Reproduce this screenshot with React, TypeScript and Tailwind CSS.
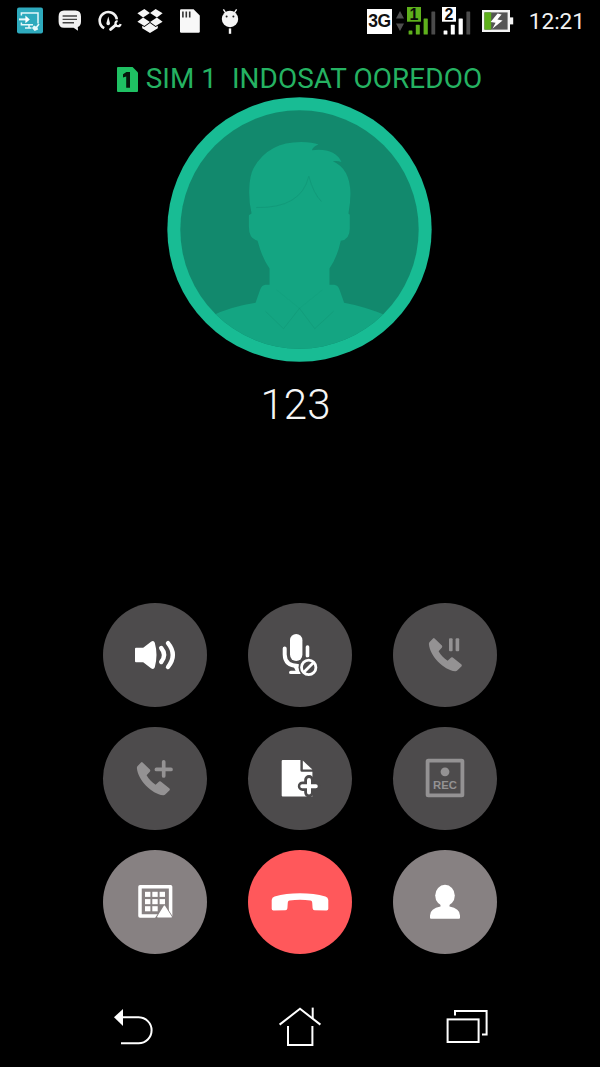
import type { ReactNode } from 'react';

const HANDSET =
  'M19.6 13.4 Q18.8 12.8 18 13.4 L14.4 17.2 Q13.8 18 13.9 19.2 C15 31 28.5 45 40.2 46.2 Q41.4 46.3 42.2 45.6 L46.6 41.2 Q47.2 40.4 46.5 39.6 L37.8 32.5 Q36.9 31.9 36.1 32.6 L32.6 35.8 C29 33.4 25.6 30 23.6 26.2 L27 22.4 Q27.6 21.5 26.9 20.6 Z';

function ButtonIcon({ children }: { children: ReactNode }) {
  return (
    <svg viewBox="0 0 60 60" className="size-[60px]" fill="currentColor">
      {children}
    </svg>
  );
}

function SpeakerIcon() {
  return (
    <ButtonIcon>
      <path d="M11 22.7 H18.2 L26 16.7 Q28.8 14.9 29.8 17.8 Q33.2 30 29.8 42.2 Q28.8 45.1 26 43.3 L18.2 37.3 H11 Q10 37.3 10 36.3 V23.7 Q10 22.7 11 22.7 Z" />
      <g fill="none" stroke="currentColor" strokeWidth="4.4" strokeLinecap="round">
        <path d="M36.2 23 Q42 30 36.2 37" />
        <path d="M43 18.2 Q52.6 30 43 42" />
      </g>
    </ButtonIcon>
  );
}

function MuteIcon() {
  return (
    <ButtonIcon>
      <rect x="20" y="9" width="12.4" height="27" rx="6.2" />
      <g fill="none" stroke="currentColor" strokeWidth="4">
        <path d="M14.7 23.4 V29.4 Q14.9 40.6 28 41" strokeLinecap="round" />
        <path d="M37.5 22 V31" strokeWidth="3.6" strokeLinecap="round" />
      </g>
      <path d="M22.8 40 H30.6 V49 H20.8 Q19 49 19 47.4 Q19 45.8 20.8 45.8 H25.6 Z" />
      <circle cx="38.7" cy="42.4" r="10.2" className="fill-[#4d4b4c]" />
      <g fill="none" stroke="currentColor" strokeWidth="2.8">
        <circle cx="38.7" cy="42.4" r="7.2" />
        <path d="M33.8 47.3 L43.6 37.5" />
      </g>
    </ButtonIcon>
  );
}

function HoldIcon() {
  return (
    <ButtonIcon>
      <path d={HANDSET} />
      <rect x="34" y="13.3" width="3.6" height="13" rx="1" />
      <rect x="40.6" y="13.3" width="3.6" height="13" rx="1" />
    </ButtonIcon>
  );
}

function AddCallIcon() {
  return (
    <ButtonIcon>
      <path d={HANDSET} transform="translate(-2 1)" />
      <path
        d="M38.7 13.8 V28 M31.4 21.4 H46"
        fill="none"
        stroke="currentColor"
        strokeWidth="3.7"
        strokeLinecap="round"
      />
    </ButtonIcon>
  );
}

function NoteIcon() {
  return (
    <ButtonIcon>
      <path d="M12.7 12 H30.4 V22.2 Q30.4 23.8 32 23.8 H42.4 V48.5 H12.7 Q11.7 48.5 11.7 47.5 V13 Q11.7 12 12.7 12 Z" />
      <path d="M32.8 12.6 L42.4 21.6 H32.8 Z" />
      <g fill="none" strokeLinecap="round">
        <path d="M39 31.8 V44.6 M32.6 38.2 H45.4" className="stroke-[#4d4b4c]" strokeWidth="9.6" />
        <path d="M39 32 V44.4 M32.2 38.2 H45.8" stroke="currentColor" strokeWidth="4" />
      </g>
    </ButtonIcon>
  );
}

function RecordIcon() {
  return (
    <ButtonIcon>
      <rect
        x="12.6"
        y="12.6"
        width="34.8"
        height="34.8"
        rx="0.6"
        fill="none"
        stroke="currentColor"
        strokeWidth="3.8"
      />
      <circle cx="30" cy="23.8" r="4.4" />
      <text
        x="30"
        y="41"
        textAnchor="middle"
        className="font-['Liberation_Sans',sans-serif] text-[11.3px] font-bold"
      >
        REC
      </text>
    </ButtonIcon>
  );
}

// The up arrow covers the bottom-right key
const KEYS = [
  [20, 19.8],
  [27.3, 19.8],
  [34.6, 19.8],
  [20, 27.1],
  [27.3, 27.1],
  [34.6, 27.1],
  [20, 34.2],
  [27.3, 34.2],
];

function KeypadIcon() {
  return (
    <ButtonIcon>
      <rect
        x="15"
        y="14.8"
        width="30.6"
        height="29.2"
        fill="none"
        stroke="currentColor"
        strokeWidth="3.5"
        strokeLinejoin="round"
      />
      <path d="M39.4 31.4 L50 48 H28.8 Z" className="fill-[#878182]" />
      {KEYS.map(([x, y]) => (
        <rect key={`${x}-${y}`} x={x} y={y} width="5.4" height="5.1" />
      ))}
      <path d="M39.4 34.2 L46.2 44.8 H32.8 Z" stroke="currentColor" strokeWidth="1.4" strokeLinejoin="round" />
    </ButtonIcon>
  );
}

function HangUpIcon() {
  return (
    <ButtonIcon>
      <path d="M1.7 28 Q1.9 25.4 4.6 24.6 Q16 21.3 30 21.3 Q44 21.3 55.4 24.6 Q58.1 25.4 58.3 28 V36.8 Q58.3 38.6 56.5 38.6 L44.6 38.2 Q42.8 38 42.6 36.2 L42.2 30.4 Q42 28.9 40.5 28.6 Q30 27 19.5 28.6 Q18 28.9 17.8 30.4 L17.4 36.2 Q17.2 38 15.4 38.2 L3.5 38.6 Q1.7 38.6 1.7 36.8 Z" />
    </ButtonIcon>
  );
}

function ContactIcon() {
  return (
    <ButtonIcon>
      <ellipse cx="30" cy="23.4" rx="9.8" ry="10.6" />
      <path d="M25.5 31 H34.5 V34.6 Q44.8 36.6 45 43.4 V45.8 Q45 46.7 44 46.7 H16 Q15 46.7 15 45.8 V43.4 Q15.2 36.6 25.5 34.6 Z" />
    </ButtonIcon>
  );
}

const BUTTONS = [
  { label: 'Speaker', icon: <SpeakerIcon />, style: 'bg-[#4d4b4c] text-white' },
  { label: 'Mute', icon: <MuteIcon />, style: 'bg-[#4d4b4c] text-white' },
  { label: 'Hold', icon: <HoldIcon />, style: 'bg-[#4d4b4c] text-[#949293]' },
  { label: 'Add call', icon: <AddCallIcon />, style: 'bg-[#4d4b4c] text-[#949293]' },
  { label: 'Note', icon: <NoteIcon />, style: 'bg-[#4d4b4c] text-white' },
  { label: 'Record', icon: <RecordIcon />, style: 'bg-[#4d4b4c] text-[#949293]' },
  { label: 'Keypad', icon: <KeypadIcon />, style: 'bg-[#878182] text-white' },
  { label: 'End call', icon: <HangUpIcon />, style: 'bg-[#ff585b] text-white' },
  { label: 'Contacts', icon: <ContactIcon />, style: 'bg-[#878182] text-white' },
];

function NotificationIcons() {
  return (
    <div className="flex gap-3">
      {/* Screen cast */}
      <svg viewBox="0 0 28 28" className="size-7">
        <rect x="1" y="0.5" width="26" height="26" rx="2" fill="#2eaabd" />
        <g fill="none" stroke="#e6f8fa" strokeWidth="1.5">
          <path d="M5.4 8.4 V6 H22 V16.5 M5.4 15.5 V17.8 H17" />
          <path d="M13 18 V20.5 M9 21 H15.5" />
          <path d="M3 12.4 H11" strokeWidth="2" />
        </g>
        <path d="M9.4 8.6 L13.8 12.4 L9.4 16.2 Z" fill="#fff" />
        <path d="M16 21 L18 18.6 L20 19.6 L22.4 16.6 L23.6 17.6 L21.4 20.4 L22.2 22.6 L18.6 24 Z" fill="#e6f8fa" />
      </svg>
      {/* Message */}
      <svg viewBox="0 0 28 28" className="size-7">
        <path
          d="M8 3.6 H19.5 Q25 3.6 25 9.6 V14.4 Q25 18.6 21.8 20 L22 23.8 L17.6 20.8 H8 Q2.6 20.8 2.6 14.8 V9.6 Q2.6 3.6 8 3.6 Z"
          fill="#f2f2f2"
        />
        <path d="M6.6 9 H21 M6.6 12.4 H21 M6.6 15.7 H18" stroke="#444" strokeWidth="1.4" />
      </svg>
      {/* Cleaner gauge */}
      <svg viewBox="0 0 28 28" className="size-7" fill="none" stroke="#f2f2f2">
        <path d="M8.2 21.2 A8.6 8.6 0 1 1 20.8 12.4" strokeWidth="2.6" />
        <path d="M12.3 9.6 L13.9 15.8 A1.8 1.8 0 1 1 10.5 15.8 Z" fill="#f2f2f2" stroke="none" />
        <path d="M14.6 22.4 L19.6 18.2" strokeWidth="3" strokeLinecap="round" />
        <path d="M21.6 14 A2.6 2.6 0 1 0 24.6 17" strokeWidth="2.2" />
      </svg>
      {/* Dropbox */}
      <svg viewBox="0 0 28 28" className="size-7" fill="#f5f5f5">
        <path d="M8.4 2 L13.9 6 L7.1 10.4 L1.4 6.3 Z" />
        <path d="M19.6 2 L26.6 6.3 L20.9 10.4 L14.1 6 Z" />
        <path d="M7.1 10.6 L13.9 14.9 L8.4 18.9 L1.4 14.8 Z" />
        <path d="M20.9 10.6 L26.6 14.8 L19.6 18.9 L14.1 14.9 Z" />
        <path d="M14 16 L19.6 20 L21.8 18.8 V21.2 L14 26 L6.2 21.2 V18.8 L8.4 20 Z" />
      </svg>
      {/* SD card */}
      <svg viewBox="0 0 28 28" className="size-7">
        <path d="M5.2 2.2 H17.6 L23.8 8.4 V24.6 Q23.8 25.8 22.6 25.8 H5.2 Q4 25.8 4 24.6 V3.4 Q4 2.2 5.2 2.2 Z" fill="#f8f8f8" />
        <path d="M6.9 4.6 V10.6 M10.3 4.6 V10.6 M13.7 4.6 V10.6" stroke="#333" strokeWidth="1.6" />
      </svg>
      {/* Android debug */}
      <svg viewBox="0 0 28 28" className="size-7">
        <circle cx="14" cy="12" r="8.2" fill="#f5f5f5" />
        <path d="M7.4 2.4 L10 6.4 M20.6 2.4 L18 6.4" stroke="#f5f5f5" strokeWidth="1.4" />
        <path d="M14 21.4 V26.8" stroke="#f5f5f5" strokeWidth="2.4" />
        <circle cx="10.6" cy="9.4" r="1" fill="#222" />
        <circle cx="17.4" cy="9.4" r="1" fill="#222" />
      </svg>
    </div>
  );
}

function SimSignal({ slot, color }: { slot: number; color: string }) {
  return (
    <svg viewBox="0 0 29 28" className="h-7 w-[29px]" fill={color}>
      <rect x="0" y="0" width="14" height="14.7" />
      <text
        x="7"
        y="12.8"
        textAnchor="middle"
        fill="#0a0a0a"
        className="font-['Liberation_Sans',sans-serif] text-[16px] font-bold"
      >
        {slot}
      </text>
      <rect x="1.6" y="23.4" width="3.8" height="4.2" rx="0.6" />
      <rect x="8.8" y="17.8" width="4" height="9.8" rx="0.6" />
      <rect x="16.6" y="11.4" width="4.2" height="16.2" rx="0.6" />
      <rect x="24.4" y="4.4" width="3.8" height="23.2" rx="0.6" fill="#4b4b4b" />
    </svg>
  );
}

function StatusBar() {
  return (
    <header className="flex h-[42px] items-center justify-between pl-4 pr-[15px]">
      <NotificationIcons />
      <div className="flex items-center">
        <span className="flex h-[25px] w-[25px] items-center justify-center bg-white font-['Liberation_Sans',sans-serif] text-[17.5px] font-bold tracking-[-0.6px] text-[#111]">
          3G
        </span>
        <svg viewBox="0 0 8 20" className="ml-1 h-5 w-2" fill="#4f4f4f">
          <path d="M4 0 L8 7.4 H0 Z M0 12.6 H8 L4 20 Z" />
        </svg>
        <div className="ml-[3.5px] flex gap-[6px]">
          <SimSignal slot={1} color="#5eb01c" />
          <SimSignal slot={2} color="#ffffff" />
        </div>
        <svg viewBox="0 0 32 22" className="ml-[11px] h-[22px] w-8">
          <rect x="0" y="0" width="28" height="22" fill="#f4f4f4" />
          <rect x="28" y="7.4" width="3.2" height="7" fill="#f4f4f4" />
          <rect x="2.4" y="2.4" width="23.2" height="17.2" fill="#555" />
          <rect x="2.4" y="2.4" width="6.8" height="17.2" fill="#5eb01c" />
          <path d="M15.6 3.6 L8.6 12 L13.6 12.8 L10.4 18.8 L20.6 10.6 L15.4 9.6 L19.6 4.6 Z" fill="#fff" />
        </svg>
        <span className="ml-[14.3px] pt-[2px] text-[22.6px] leading-7 text-[#f2f2f2]">12:21</span>
      </div>
    </header>
  );
}

function Avatar() {
  return (
    <svg viewBox="0 0 796 796" className="-ml-px size-[265px]">
      <defs>
        <clipPath id="face">
          <circle cx="398" cy="398" r="358" />
        </clipPath>
      </defs>
      <circle cx="398" cy="398" r="397" fill="#18bc94" />
      <circle cx="398" cy="398" r="358" fill="#12896d" />
      <g clipPath="url(#face)">
        <g transform="translate(-22 -20)">
          <path
            d="M268 375 L276 370 Q268 335 269 300 Q270 255 282 234 Q325 155 425 155 Q460 155 477 163 Q462 168 457 180 Q525 172 546 215 Q533 210 520 213 Q572 235 573 310 Q573 340 567 370 L571 374 V415 Q571 448 544 452 Q534 500 510 535 V584 H524 Q535 585 540 598 L554 638 Q620 650 690 680 V820 H150 V680 Q210 650 288 638 L302 598 Q307 585 318 584 H330 V535 Q308 505 294 452 Q268 446 268 410 Z"
            fill="#14a582"
          />
          <g fill="none" stroke="#129a79" strokeWidth="3">
            <path d="M290 352 Q425 355 448 258 Q462 310 486 334" />
            <path d="M318 664 L372 716 L420 655 L466 716 L522 664" strokeOpacity="0.7" />
            <path d="M352 600 L420 655 L488 600" strokeOpacity="0.3" />
          </g>
        </g>
      </g>
    </svg>
  );
}

function NavBar() {
  return (
    <nav className="mt-auto flex h-[65px] items-start justify-between px-[109px] text-white">
      <svg viewBox="0 0 48 48" className="size-12" fill="none" stroke="currentColor" strokeWidth="2">
        <path d="M12 15.3 H29.6 A13 13 0 0 1 29.6 41.3 H12" />
        <path d="M5 15.3 L14 7 V24 Z" fill="currentColor" stroke="none" />
      </svg>
      <svg viewBox="0 0 48 48" className="size-12" fill="none" stroke="currentColor" strokeWidth="2">
        <path d="M3.6 22.6 L24 6.8 L44.4 22.6" />
        <path d="M36.7 5.6 V16.4" />
        <path d="M12 24 V43 H36.4 V24" />
      </svg>
      <svg viewBox="0 0 48 48" className="size-12" fill="none" stroke="currentColor" strokeWidth="2">
        <rect x="4.6" y="17.4" width="31" height="22.6" />
        <path d="M12 13.6 V9 H43.6 V32.4 H39" />
      </svg>
    </nav>
  );
}

export default function App() {
  return (
    <div className="flex h-[1067px] w-[600px] flex-col overflow-hidden bg-black font-['Roboto',sans-serif]">
      <StatusBar />

      <main className="flex flex-col items-center">
        <div className="mt-[19px] flex h-9 items-center text-[27.9px] leading-9 text-[#25b262]">
          <svg viewBox="0 0 21 25" className="mr-2 h-[25px] w-[21px]">
            <path d="M1 0 H15.6 L21 5.4 V24 Q21 25 20 25 H1 Q0 25 0 24 V1 Q0 0 1 0 Z" fill="#1fc063" />
            <path d="M9.4 5 H13 V20.8 H9.2 V9.4 L6 10.4 V7.2 Z" fill="#06150b" />
          </svg>
          <span>SIM 1</span>
          <span className="ml-[15px] mr-px tracking-[0.08px]">INDOSAT OOREDOO</span>
        </div>
        <Avatar />
        <h1 className="mt-[18px] h-[50px] pr-[9px] text-[42px] font-light leading-[50px] text-[#f5f5f5]">123</h1>

        <div className="mt-[173px] grid grid-cols-3 gap-x-[41.5px] gap-y-5">
          {BUTTONS.map((b) => (
            <button
              key={b.label}
              aria-label={b.label}
              className={`flex size-[103.5px] items-center justify-center rounded-full ${b.style}`}
            >
              {b.icon}
            </button>
          ))}
        </div>
      </main>

      <NavBar />
    </div>
  );
}
